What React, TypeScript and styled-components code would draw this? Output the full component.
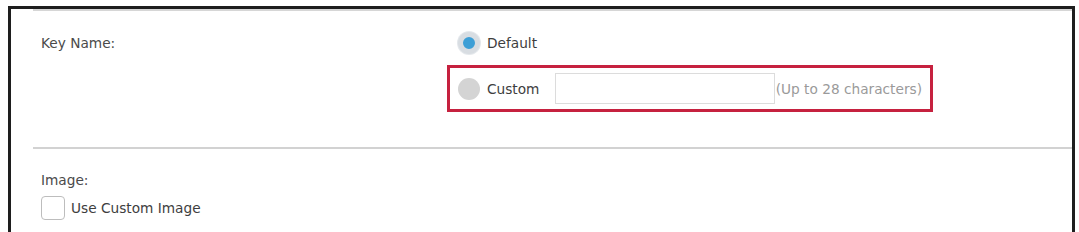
import styled, { createGlobalStyle } from "styled-components";

const GlobalStyle = createGlobalStyle`
  html, body {
    margin: 0;
    padding: 0;
    background: #ffffff;
    font-family: "DejaVu Sans", Verdana, sans-serif;
  }
`;

const Frame = styled.div`
  height: 226px;
  margin: 6px 4px 0 8px;
  border: 3px solid #1e1e1e;
  border-bottom: none;
  background: #fff;
  overflow: hidden;
`;

const Inner = styled.div`
  margin-left: 22px;
  border-top: 2px solid #d6d6d6;
`;

const KeySection = styled.div`
  display: grid;
  grid-template-columns: 417px 1fr;
  padding: 21px 0 35px 8px;
  border-bottom: 2px solid #d2d2d2;
`;

const Label = styled.div`
  font-size: 13.7px;
  line-height: 22px;
  color: #4a4a4a;
`;

const Options = styled.div`
  display: flex;
  flex-direction: column;
  align-items: flex-start;
`;

const OptionRow = styled.div<{ $highlight?: boolean }>`
  display: flex;
  align-items: center;
  box-sizing: border-box;
  height: ${(p) => (p.$highlight ? "47px" : "22px")};
  margin-top: ${(p) => (p.$highlight ? "11px" : "0")};
  margin-left: ${(p) => (p.$highlight ? "-11px" : "0")};
  padding: ${(p) => (p.$highlight ? "0 8px 0 8px" : "0")};
  width: ${(p) => (p.$highlight ? "486px" : "auto")};
  border: ${(p) => (p.$highlight ? "3px solid #c6213f" : "none")};
`;

const Radio = styled.span<{ $checked?: boolean }>`
  width: 22px;
  height: 22px;
  border-radius: 50%;
  box-sizing: border-box;
  flex-shrink: 0;
  background: ${(p) => (p.$checked ? "#3d9fd6" : "#d4d4d4")};
  border: ${(p) => (p.$checked ? "5px solid #d8dde2" : "none")};
  box-shadow: ${(p) => (p.$checked ? "0 0 0 1px #e4e8ec" : "none")};
`;

const OptionText = styled.span`
  margin-left: 7px;
  font-size: 13.7px;
  color: #3e3e3e;
`;

const TextInput = styled.input`
  box-sizing: border-box;
  width: 220px;
  height: 31px;
  margin-left: 16px;
  border: 1px solid #dcdcdc;
  outline: none;
  background: #fff;
`;

const Hint = styled.span`
  margin-left: 1px;
  font-size: 13.7px;
  color: #9a9a9a;
  white-space: nowrap;
`;

const ImageSection = styled.div`
  padding: 23px 0 0 8px;
`;

const ImageLabel = styled(Label)`
  line-height: 16px;
`;

const CheckRow = styled.label`
  display: flex;
  align-items: center;
  margin-top: 8px;
`;

const CheckBox = styled.span`
  width: 24px;
  height: 24px;
  box-sizing: border-box;
  border: 1.5px solid #bdbdbd;
  border-radius: 4px;
  background: #fff;
`;

const CheckText = styled.span`
  margin-left: 6px;
  font-size: 13.7px;
  color: #3e3e3e;
`;

function App() {
  return (
    <>
      <GlobalStyle />
      <Frame>
        <Inner>
          <KeySection>
            <Label>Key Name:</Label>
            <Options>
              <OptionRow>
                <Radio $checked />
                <OptionText>Default</OptionText>
              </OptionRow>
              <OptionRow $highlight>
                <Radio />
                <OptionText>Custom</OptionText>
                <TextInput type="text" />
                <Hint>(Up to 28 characters)</Hint>
              </OptionRow>
            </Options>
          </KeySection>
          <ImageSection>
            <ImageLabel>Image:</ImageLabel>
            <CheckRow>
              <CheckBox />
              <CheckText>Use Custom Image</CheckText>
            </CheckRow>
          </ImageSection>
        </Inner>
      </Frame>
    </>
  );
}

export default App;
